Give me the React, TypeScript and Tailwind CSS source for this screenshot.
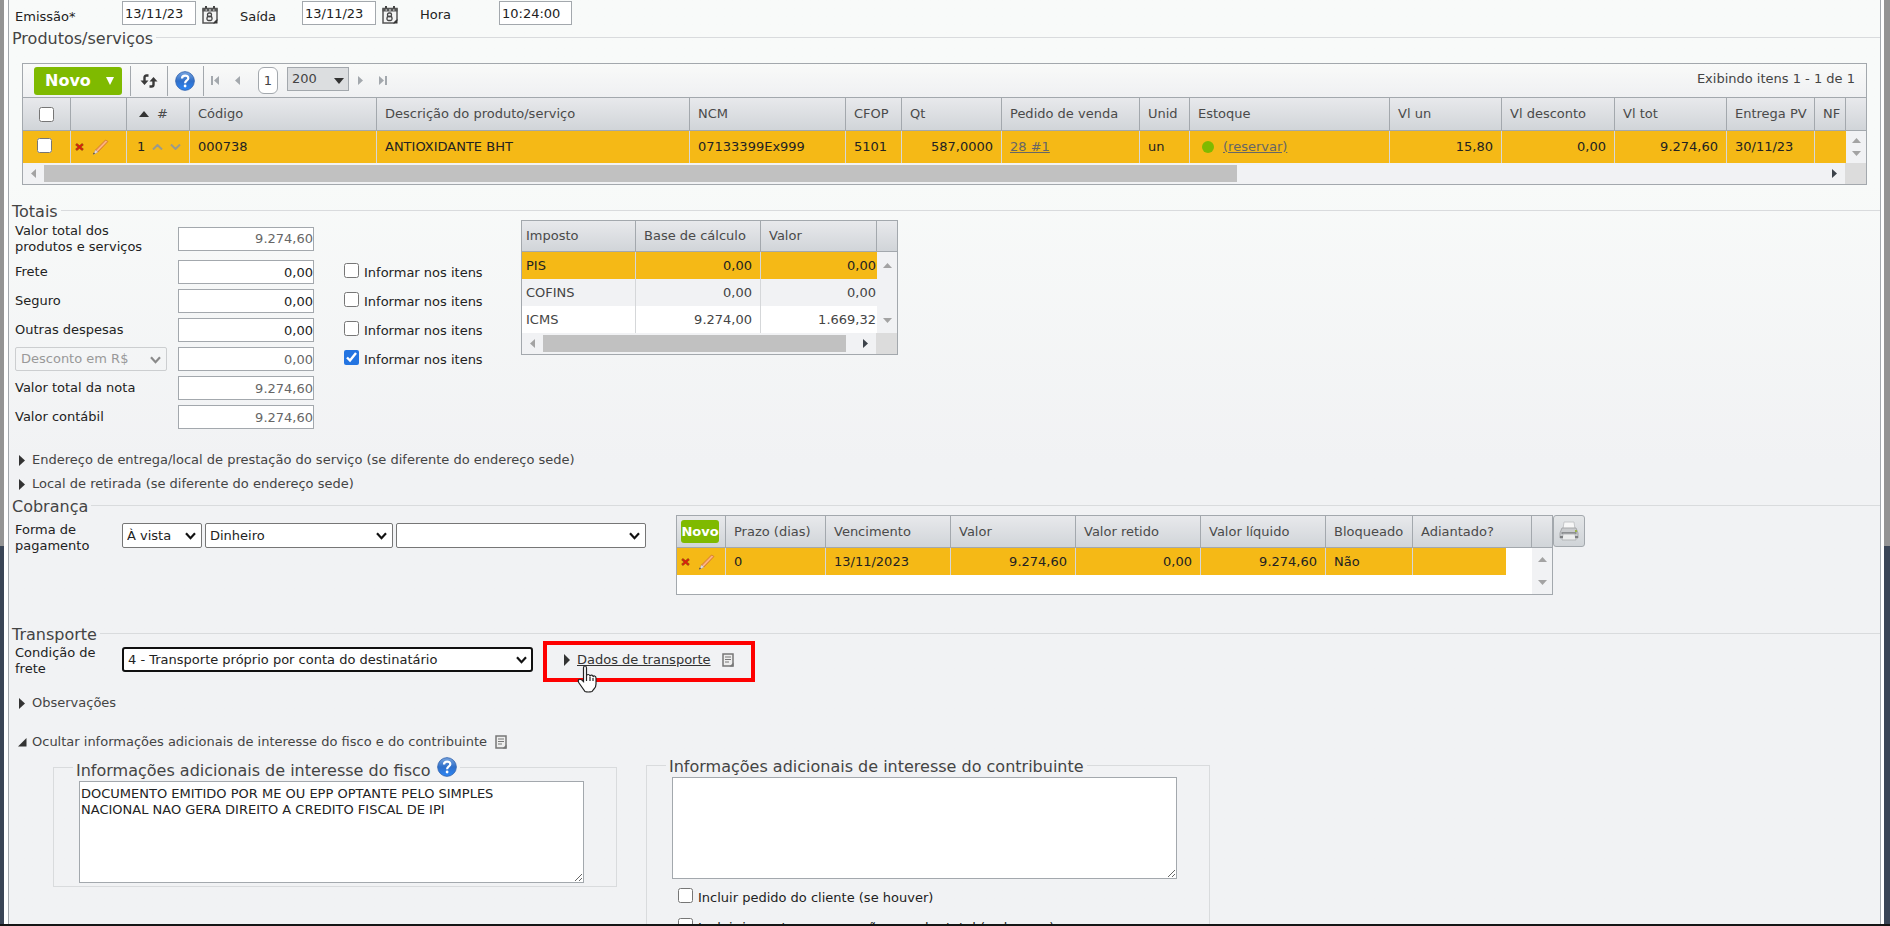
import clsx from "clsx";
import React from "react";

type Align = "left" | "right";

const inputStyle =
  "h-6 border border-[#a3a8ad] bg-white text-[13px] text-[#222] outline-none";
const headRow =
  "bg-linear-to-b from-[#e8e9ec] to-[#d0d4d8] text-left text-[#4a4a4a]";
const headCell = "border-r border-b border-[#a3a8ad] px-2 font-normal";

function Triangle({
  dir,
  className,
}: {
  dir: "up" | "down" | "left" | "right";
  className?: string;
}) {
  const points = {
    up: "0,6 6,0 12,6",
    down: "0,0 12,0 6,6",
    left: "6,0 6,12 0,6",
    right: "0,0 6,6 0,12",
  };
  const vertical = dir === "up" || dir === "down";
  return (
    <svg
      viewBox={vertical ? "0 0 12 6" : "0 0 6 12"}
      preserveAspectRatio="none"
      className={clsx("shrink-0", className)}
      fill="currentColor"
      aria-hidden="true"
    >
      <polygon points={points[dir]} />
    </svg>
  );
}

function CalendarIcon() {
  return (
    <svg width="16" height="18" viewBox="0 0 16 18" aria-hidden="true">
      <path d="M1 2.500h14V14l-3 3H1z" fill="#f4f4f4" stroke="#555" strokeWidth="1.500" />
      <path d="M.5 4h15" stroke="#555" strokeWidth="3" />
      <path d="M4 0v2.500M12 0v2.500" stroke="#444" strokeWidth="2" />
      <path d="M3.500 4h1.500M7 4h2M11 4h1.500" stroke="#eee" strokeWidth="1" />
      <rect x="5.500" y="7" width="4" height="3.500" rx="1.500" fill="none" stroke="#444" strokeWidth="1.300" />
      <rect x="5" y="10.500" width="5" height="4" rx="1.500" fill="none" stroke="#444" strokeWidth="1.300" />
      <path d="M15.500 13v4.500H11z" fill="#333" />
    </svg>
  );
}

function HelpIcon() {
  return (
    <svg width="20" height="20" viewBox="0 0 20 20" aria-hidden="true">
      <defs>
        <linearGradient id="help" x1="0" y1="0" x2="0" y2="1">
          <stop offset="0" stopColor="#7aa6e0" />
          <stop offset="0.5" stopColor="#2f6fc9" />
          <stop offset="1" stopColor="#2a86f8" />
        </linearGradient>
      </defs>
      <circle cx="10" cy="10" r="9.300" fill="url(#help)" stroke="#3a6bb5" />
      <path
        d="M7 7.500c0-4 6.300-3.800 6.300-.3 0 2.300-3.200 2.300-3.200 5"
        fill="none"
        stroke="#fff"
        strokeWidth="2.200"
      />
      <circle cx="10.100" cy="15" r="1.400" fill="#fff" />
    </svg>
  );
}

function RefreshIcon() {
  return (
    <svg width="18" height="14" viewBox="0 0 18 14" aria-hidden="true">
      <path
        d="M8.500 1.500H6.500Q4.500 1.500 4.500 3.500V8M9.500 12.500h2q2 0 2-2V6"
        fill="none"
        stroke="#3a3a3a"
        strokeWidth="2.400"
      />
      <path d="M.5 6.500h8L4.500 11zM9.500 7.500h8L13.500 3z" fill="#3a3a3a" />
    </svg>
  );
}

function DeleteIcon() {
  return (
    <svg width="9" height="8" viewBox="0 0 9 8" aria-hidden="true">
      <path d="M1 1l7 6M8 1L1 7" stroke="#9a5a10" strokeWidth="2.600" />
      <path d="M1.500 1.200l6 5.600M7.500 1.200l-6 5.600" stroke="#e01b0c" strokeWidth="1.500" />
    </svg>
  );
}

function PencilIcon() {
  return (
    <svg width="17" height="16" viewBox="0 0 17 16" aria-hidden="true">
      <path d="M3.500 11L13.500 1l2.500 1.500L6 13z" fill="#f79a5c" stroke="#c9762e" strokeWidth=".7" />
      <path d="M4.800 12L14.500 2" stroke="#fcc9a0" />
      <path d="M3.500 11L6 13l-4.500 2.500z" fill="#e8e0ee" stroke="#a99" strokeWidth=".5" />
      <path d="M1 15.500l2-.9-1.200-1z" fill="#333" />
    </svg>
  );
}

function NoteIcon() {
  return (
    <svg width="12" height="14" viewBox="0 0 12 14" aria-hidden="true">
      <path d="M1 1h10v12H1z" fill="#eee" stroke="#777" strokeWidth="1.500" />
      <path d="M3 4h6M3 6.500h6M3 9h4" stroke="#777" />
      <path d="M11.500 9.500v4H7.500z" fill="#777" />
    </svg>
  );
}

function PrinterIcon() {
  return (
    <svg width="20" height="20" viewBox="0 0 20 20" aria-hidden="true">
      <path d="M5 1h10l1 7H4z" fill="#f7f7f7" stroke="#c5c7c9" />
      <path d="M3 7h14l2 5v5H1v-5z" fill="#c9cbcd" stroke="#a7a9ab" />
      <path d="M2.500 11h15v2h-15z" fill="#8d8f91" />
      <path d="M4 13h12l1 6H3z" fill="#eceded" stroke="#b5b7b9" />
      <path d="M1 15h3v2H1zM16 15h3v2h-3z" fill="#7d7f81" />
      <path d="M16 9h2v2h-2z" fill="#9db54a" />
    </svg>
  );
}

function HandCursor() {
  return (
    <svg width="20" height="28" viewBox="0 0 20 28" aria-hidden="true">
      <path
        d="M6.500 16V3Q6.500 1 8 1t1.500 2v8q0-1.500 1.700-1.500T13 11.500q0-1.500 1.600-1.300T16 12q.3-1.200 1.600-1T19 13v6q0 3-2 5l-2 2.500q-4 1-7 0L2 18q-1.500-2.500 0-3.500t4.500 2z"
        fill="#fff"
        stroke="#222"
        strokeWidth="1.200"
      />
      <path d="M9.500 11v5M13 12v4M16 13v3" stroke="#222" strokeWidth="1.200" />
    </svg>
  );
}

function Select({
  width,
  className,
  children,
  ...props
}: React.ComponentProps<"select"> & { width: string }) {
  return (
    <div className={clsx("relative", width)}>
      <select
        {...props}
        className={clsx("block w-full appearance-none pr-5", className)}
      >
        {children}
      </select>
      <svg
        width="11"
        height="8"
        viewBox="0 0 11 8"
        className={clsx(
          "pointer-events-none absolute top-[9px] right-[6px]",
          props.disabled ? "text-[#8a8a8a]" : "text-[#111]"
        )}
        fill="none"
        stroke="currentColor"
        strokeWidth="2.200"
        aria-hidden="true"
      >
        <path d="M1 1.200l4.500 5L10 1.200" />
      </svg>
    </div>
  );
}

const selectStyle =
  "h-[25px] rounded-[2px] border border-[#767676] bg-white pl-1 text-[13px] text-[#222]";

function SectionTitle({ children }: { children: React.ReactNode }) {
  return (
    <div className="flex h-[18px] pl-[3px]">
      <h2 className="pr-[3px] text-[16px] leading-5 text-[#444]">{children}</h2>
      <div className="mt-2 h-px flex-1 bg-[#d9dbdd]" />
    </div>
  );
}

function Disclosure({
  children,
  open,
}: {
  children: React.ReactNode;
  open?: boolean;
}) {
  return (
    <button
      type="button"
      aria-expanded={!!open}
      className="flex h-[22px] items-center pl-[9px] text-[#444]"
    >
      <span className="flex w-3.5">
        {open ? (
          <svg width="9" height="9" viewBox="0 0 9 9" aria-hidden="true">
            <path d="M8.500 0v8.500H0z" fill="#333" />
          </svg>
        ) : (
          <Triangle dir="right" className="ml-px h-[11px] w-1.5 text-[#333]" />
        )}
      </span>
      {children}
    </button>
  );
}

function HorizontalScroll({ thumb }: { thumb: string }) {
  return (
    <div className="flex h-[21px] bg-[#f1f2f4]">
      <div className="flex flex-1 items-center">
        <span className="flex w-[21px] justify-center">
          <Triangle dir="left" className="h-[9px] w-[5px] text-[#a3a3a3]" />
        </span>
        <div className="flex-1">
          <div className={clsx("h-[17px] bg-[#c1c1c1]", thumb)} />
        </div>
        <span className="flex w-[21px] justify-center">
          <Triangle dir="right" className="h-[9px] w-[5px] text-[#3c434a]" />
        </span>
      </div>
      <div className="w-[21px] bg-[#dcdcdc]" />
    </div>
  );
}

function VerticalArrows() {
  return (
    <div className="flex h-full flex-col items-center justify-between">
      <Triangle dir="up" className="h-[5px] w-[9px] text-[#a3a3a3]" />
      <Triangle dir="down" className="h-[5px] w-[9px] text-[#a3a3a3]" />
    </div>
  );
}

function Cell({
  children,
  align = "left",
  className,
}: {
  children?: React.ReactNode;
  align?: Align;
  className?: string;
}) {
  return (
    <td
      className={clsx(
        "border-r border-[#d5d7d9] px-2 whitespace-nowrap",
        align === "right" && "text-right",
        className
      )}
    >
      {children}
    </td>
  );
}

function RowActions() {
  return (
    <div className="flex items-center gap-2">
      <button type="button" aria-label="Excluir">
        <DeleteIcon />
      </button>
      <button type="button" aria-label="Editar">
        <PencilIcon />
      </button>
    </div>
  );
}

function HeaderFields() {
  return (
    <div className="flex h-[29px] items-start pt-px pl-1.5 text-[#222]">
      <label htmlFor="emissao" className="mt-1 w-[107px] leading-6">
        Emissão*
      </label>
      <input id="emissao" className={clsx(inputStyle, "w-[74px] px-0.5")} defaultValue="13/11/23" />
      <button type="button" aria-label="Calendário de emissão" className="mt-[5px] ml-1.5">
        <CalendarIcon />
      </button>
      <label htmlFor="saida" className="mt-1 ml-[22px] w-[62px] leading-6">
        Saída
      </label>
      <input id="saida" className={clsx(inputStyle, "w-[74px] px-0.5")} defaultValue="13/11/23" />
      <button type="button" aria-label="Calendário de saída" className="mt-[5px] ml-1.5">
        <CalendarIcon />
      </button>
      <label htmlFor="hora" className="mt-0.5 ml-[22px] w-[79px] leading-6">
        Hora
      </label>
      <input id="hora" className={clsx(inputStyle, "w-[73px] px-0.5")} defaultValue="10:24:00" />
    </div>
  );
}

function Toolbar() {
  const pager = "text-[#a3a8ad]";
  return (
    <div className="flex h-[34px] items-center border-b border-[#a3a8ad] bg-linear-to-b from-[#f9faf9] to-[#eff0f2] pr-[11px] pl-[11px]">
      <button
        type="button"
        className="flex h-7 w-[88px] items-center justify-between rounded-[3px] bg-[#7fba00] pr-2 pl-[11px] text-[16px] font-bold text-white"
      >
        Novo
        <Triangle dir="down" className="h-2 w-2" />
      </button>
      <span className="ml-2 h-[30px] w-px bg-[#a3a8ad]" />
      <button type="button" aria-label="Atualizar" className="ml-[9px]">
        <RefreshIcon />
      </button>
      <span className="ml-[9px] h-[30px] w-px bg-[#a3a8ad]" />
      <button type="button" aria-label="Ajuda" className="ml-[7px]">
        <HelpIcon />
      </button>
      <span className="ml-2 h-[30px] w-px bg-[#a3a8ad]" />
      <button type="button" aria-label="Primeira página" className={clsx("ml-[7px] flex", pager)}>
        <span className="h-[9px] w-0.5 bg-[#a3a8ad]" />
        <Triangle dir="left" className="ml-px h-[9px] w-[5px]" />
      </button>
      <button type="button" aria-label="Página anterior" className={clsx("ml-4", pager)}>
        <Triangle dir="left" className="h-[9px] w-[5px]" />
      </button>
      <button
        type="button"
        className="ml-[18px] h-[27px] w-5 rounded-[6px] border border-[#a3a8ad] bg-white text-[#444]"
      >
        1
      </button>
      <div className="relative mb-[3px] ml-[9px]">
        <select
          aria-label="Itens por página"
          className="block h-6 w-[62px] appearance-none border border-[#a3a8ad] bg-[#dcdee0] pl-1 text-[#444]"
        >
          <option>200</option>
        </select>
        <Triangle
          dir="down"
          className="pointer-events-none absolute top-[11px] right-[5px] h-[6px] w-[10px] text-[#333]"
        />
      </div>
      <button type="button" aria-label="Próxima página" className={clsx("ml-[9px]", pager)}>
        <Triangle dir="right" className="h-[9px] w-[5px]" />
      </button>
      <button type="button" aria-label="Última página" className={clsx("ml-4 flex", pager)}>
        <Triangle dir="right" className="mr-px h-[9px] w-[5px]" />
        <span className="h-[9px] w-0.5 bg-[#a3a8ad]" />
      </button>
      <span className="mb-[3px] ml-auto text-[#444]">Exibindo itens 1 - 1 de 1</span>
    </div>
  );
}

function ProductsGrid() {
  const headers = ["NCM", "CFOP", "Qt", "Pedido de venda", "Unid", "Estoque"];
  const values = ["Vl un", "Vl desconto", "Vl tot", "Entrega PV", "NF"];
  return (
    <div className="mx-[13px] mt-4 border border-[#a3a8ad]">
      <Toolbar />
      <table className="w-full table-fixed border-separate border-spacing-0">
        <colgroup>
          <col className="w-12" />
          <col className="w-[56px]" />
          <col className="w-[63px]" />
          <col className="w-[187px]" />
          <col />
          <col className="w-[156px]" />
          <col className="w-[56px]" />
          <col className="w-[100px]" />
          <col className="w-[138px]" />
          <col className="w-[50px]" />
          <col className="w-[200px]" />
          <col className="w-[112px]" />
          <col className="w-[113px]" />
          <col className="w-[112px]" />
          <col className="w-[88px]" />
          <col className="w-[31px]" />
          <col className="w-[20px]" />
        </colgroup>
        <thead>
          <tr className={clsx("h-[33px]", headRow)}>
            <th className="border-r border-b border-[#a3a8ad] pl-4">
              <input type="checkbox" aria-label="Selecionar todos" className="block size-[15px]" />
            </th>
            <th className={headCell} />
            <th className={headCell}>
              <span className="flex items-center gap-2 pl-1">
                <Triangle dir="up" className="h-[6px] w-[10px] text-[#333]" />#
              </span>
            </th>
            <th className={headCell}>Código</th>
            <th className={headCell}>Descrição do produto/serviço</th>
            {headers.map((h) => (
              <th key={h} className={headCell}>
                {h}
              </th>
            ))}
            {values.map((h) => (
              <th key={h} className={clsx(headCell, "whitespace-nowrap")}>
                {h}
              </th>
            ))}
            <th className="border-b border-[#a3a8ad]" />
          </tr>
        </thead>
        <tbody>
          <tr className="h-8 bg-[#f5b916] text-[#222]">
            <td className="border-r border-[#d5d7d9] pb-1 pl-[14px]">
              <input type="checkbox" aria-label="Selecionar item 1" className="block size-[15px]" />
            </td>
            <td className="border-r border-[#d5d7d9] pl-1">
              <RowActions />
            </td>
            <td className="border-r border-[#d5d7d9] pl-[10px]">
              <span className="flex items-center gap-[7px]">
                1
                <svg width="30" height="6" viewBox="0 0 30 6" aria-hidden="true">
                  <path
                    d="M1 5.500l4.500-4.500L10 5.500M19 .5L23.500 5 28 .5"
                    fill="none"
                    stroke="#9a9a8c"
                    strokeWidth="2"
                  />
                </svg>
              </span>
            </td>
            <Cell>000738</Cell>
            <Cell>ANTIOXIDANTE BHT</Cell>
            <Cell>07133399Ex999</Cell>
            <Cell>5101</Cell>
            <Cell align="right">587,0000</Cell>
            <Cell>
              <a href="#pedido" className="text-[#666] underline">
                28 #1
              </a>
            </Cell>
            <Cell>un</Cell>
            <Cell>
              <span className="flex items-center gap-[9px] pl-1">
                <span className="size-3 rounded-full bg-[#7fba00]" />
                <a href="#reservar" className="text-[#666] underline">
                  (reservar)
                </a>
              </span>
            </Cell>
            <Cell align="right">15,80</Cell>
            <Cell align="right">0,00</Cell>
            <Cell align="right">9.274,60</Cell>
            <Cell>30/11/23</Cell>
            <td />
            <td className="h-8 bg-[#f1f2f4] py-[7px]">
              <div className="h-[18px]">
                <VerticalArrows />
              </div>
            </td>
          </tr>
        </tbody>
      </table>
      <HorizontalScroll thumb="w-[67%]" />
    </div>
  );
}

const totals = [
  { id: "frete", label: "Frete", value: "0,00", check: true },
  { id: "seguro", label: "Seguro", value: "0,00", check: true },
  { id: "outras", label: "Outras despesas", value: "0,00", check: true },
  { id: "desconto", label: "Desconto em R$", value: "0,00", check: true, select: true },
  { id: "total-nota", label: "Valor total da nota", value: "9.274,60", readOnly: true },
  { id: "contabil", label: "Valor contábil", value: "9.274,60", readOnly: true },
];

function TotalsForm() {
  return (
    <div className="flex w-[512px] flex-col gap-[5px] pt-0.5 pl-1.5 text-[#222]">
      <div className="flex h-[33px] items-center">
        <label htmlFor="total-produtos" className="w-[163px] leading-4">
          Valor total dos
          <br />
          produtos e serviços
        </label>
        <input
          id="total-produtos"
          readOnly
          className={clsx(inputStyle, "w-[136px] text-right text-[#666]")}
          value="9.274,60"
        />
      </div>
      {totals.map((t) => (
        <div key={t.id} className="flex h-6 items-center">
          {t.select ? (
            <div className="w-[163px]">
              <Select
                disabled
                width="w-[152px]"
                aria-label="Tipo de desconto"
                className="h-6 rounded-[2px] border border-[#ccced0] bg-transparent pl-[5px] text-[#999]"
              >
                <option>{t.label}</option>
              </Select>
            </div>
          ) : (
            <label htmlFor={t.id} className="w-[163px]">
              {t.label}
            </label>
          )}
          <input
            id={t.id}
            aria-label={t.label}
            readOnly={t.readOnly}
            className={clsx(
              inputStyle,
              "w-[136px] text-right",
              (t.readOnly || t.select) && "text-[#666]"
            )}
            defaultValue={t.value}
          />
          {t.check && (
            <label className="ml-[30px] flex gap-[5px]">
              <input
                type="checkbox"
                defaultChecked={t.select}
                className="size-[15px] accent-[#2374e1]"
              />
              <span className="pt-0.5 leading-4">Informar nos itens</span>
            </label>
          )}
        </div>
      ))}
    </div>
  );
}

function TaxTable() {
  const rows = [
    ["PIS", "0,00", "0,00"],
    ["COFINS", "0,00", "0,00"],
    ["ICMS", "9.274,00", "1.669,32"],
  ];
  const colors = ["bg-[#f5b916] text-[#222]", "bg-[#f1f2f4]", "bg-white"];
  return (
    <div className="w-[377px] self-start border border-[#a3a8ad] bg-[#f1f2f4] text-[#444]">
      <table className="w-full table-fixed border-separate border-spacing-0">
        <colgroup>
          <col className="w-[114px]" />
          <col className="w-[125px]" />
          <col />
          <col className="w-[20px]" />
        </colgroup>
        <thead>
          <tr className={clsx("h-[31px]", headRow)}>
            <th className="border-r border-b border-[#a3a8ad] pl-1 font-normal">Imposto</th>
            <th className={clsx(headCell, "whitespace-nowrap")}>Base de cálculo</th>
            <th className={headCell}>Valor</th>
            <th className="border-b border-[#a3a8ad]" />
          </tr>
        </thead>
        <tbody>
          {rows.map(([name, base, value], i) => (
            <tr key={name} className={clsx("h-[27px]", colors[i])}>
              <td className="border-r border-[#d5d7d9] pl-1">{name}</td>
              <Cell align="right">{base}</Cell>
              <td className="pr-px text-right">{value}</td>
              {i === 0 && (
                <td rowSpan={3} className="bg-[#f1f2f4]">
                  <div className="h-[60px]">
                    <VerticalArrows />
                  </div>
                </td>
              )}
            </tr>
          ))}
        </tbody>
      </table>
      <HorizontalScroll thumb="w-[97%]" />
    </div>
  );
}

function ChargesTable() {
  const headers = [
    "Prazo (dias)",
    "Vencimento",
    "Valor",
    "Valor retido",
    "Valor líquido",
    "Bloqueado",
    "Adiantado?",
  ];
  return (
    <div className="flex h-20 w-[877px] flex-col border border-[#a3a8ad] bg-white">
      <table className="w-full table-fixed border-separate border-spacing-0">
        <colgroup>
          <col className="w-[49px]" />
          <col className="w-[100px]" />
          <col className="w-[125px]" />
          <col className="w-[125px]" />
          <col className="w-[125px]" />
          <col className="w-[125px]" />
          <col className="w-[87px]" />
          <col />
          <col className="w-[20px]" />
        </colgroup>
        <thead>
          <tr className={clsx("h-8", headRow)}>
            <th className="border-r border-b border-[#a3a8ad] pl-1">
              <button
                type="button"
                className="flex h-[23px] w-[38px] items-center justify-center rounded-[3px] bg-[#7fba00] text-[13px] font-bold text-white"
              >
                Novo
              </button>
            </th>
            {headers.map((h) => (
              <th key={h} className={clsx(headCell, "whitespace-nowrap")}>
                {h}
              </th>
            ))}
            <th className="border-b border-[#a3a8ad]" />
          </tr>
        </thead>
        <tbody>
          <tr className="h-[27px] text-[#222]">
            <td className="border-r border-[#d5d7d9] bg-[#f5b916] pl-1">
              <RowActions />
            </td>
            <Cell className="bg-[#f5b916]">0</Cell>
            <Cell className="bg-[#f5b916]">13/11/2023</Cell>
            <Cell align="right" className="bg-[#f5b916]">9.274,60</Cell>
            <Cell align="right" className="bg-[#f5b916]">0,00</Cell>
            <Cell align="right" className="bg-[#f5b916]">9.274,60</Cell>
            <Cell className="bg-[#f5b916]">Não</Cell>
            <td>
              <div className="mr-[26px] h-[27px] bg-[#f5b916]" />
            </td>
            <td rowSpan={2} className="bg-[#f1f2f4]">
              <div className="h-7">
                <VerticalArrows />
              </div>
            </td>
          </tr>
          <tr className="h-[19px]">
            <td colSpan={8} />
          </tr>
        </tbody>
      </table>
    </div>
  );
}

function AdditionalInfo() {
  return (
    <div className="flex items-start gap-[29px] pl-11">
      <fieldset className="w-[564px] border border-[#d9dbdd] pb-[3px]">
        <legend className="ml-[19px] flex h-7 items-center gap-1.5 px-[3px] text-[16px] leading-5 text-[#444]">
          <span className="pt-2">Informações adicionais de interesse do fisco</span>
          <HelpIcon />
        </legend>
        <textarea
          aria-label="Informações adicionais de interesse do fisco"
          className="ml-[25px] block h-[102px] w-[505px] border border-[#a3a8ad] bg-white px-px py-1 leading-4 text-[#222]"
          defaultValue={
            "DOCUMENTO EMITIDO POR ME OU EPP OPTANTE PELO SIMPLES\nNACIONAL NAO GERA DIREITO A CREDITO FISCAL DE IPI"
          }
        />
      </fieldset>
      <fieldset className="w-[564px] border border-[#d9dbdd] pb-10">
        <legend className="ml-[19px] h-6 px-[3px] pt-1 text-[16px] leading-5 text-[#444]">
          Informações adicionais de interesse do contribuinte
        </legend>
        <textarea
          aria-label="Informações adicionais de interesse do contribuinte"
          className="ml-[25px] block h-[102px] w-[505px] border border-[#a3a8ad] bg-white px-px py-1 leading-4 text-[#222]"
        />
        <div className="mt-[9px] ml-[31px] flex flex-col gap-3 text-[#222]">
          <label className="flex gap-[5px]">
            <input type="checkbox" className="size-[15px]" />
            <span className="pt-0.5 leading-4">Incluir pedido do cliente (se houver)</span>
          </label>
          <label className="flex gap-[5px]">
            <input type="checkbox" className="size-[15px]" />
            <span className="pt-0.5 leading-4">
              Incluir imposto por operação no valor total (se houver)
            </span>
          </label>
        </div>
      </fieldset>
    </div>
  );
}

export default function App(): ReturnType<React.FC> {
  return (
    <div className="flex h-screen flex-col overflow-hidden bg-linear-to-b from-[#949494] from-59% to-[#3a4556] to-59% font-['DejaVu_Sans',Verdana,sans-serif] text-[13px] leading-4">
      <div className="mr-1.5 ml-1 flex min-h-0 flex-1 bg-white pr-[3px] pl-1">
        <main className="flex-1 overflow-hidden border-x border-[#a3a8ad] bg-linear-to-b from-[#f8faf9] from-20% to-[#f1f2f4] to-50%">
          <HeaderFields />

          <SectionTitle>Produtos/serviços</SectionTitle>
          <ProductsGrid />

          <section className="mt-[17px]">
            <SectionTitle>Totais</SectionTitle>
            <div className="flex">
              <TotalsForm />
              <TaxTable />
            </div>
            <div className="mt-5 flex flex-col items-start gap-0.5">
              <Disclosure>
                Endereço de entrega/local de prestação do serviço (se diferente do endereço sede)
              </Disclosure>
              <Disclosure>Local de retirada (se diferente do endereço sede)</Disclosure>
            </div>
          </section>

          <section className="mt-0.5">
            <SectionTitle>Cobrança</SectionTitle>
            <div className="flex items-start pl-1.5">
              <label htmlFor="forma" className="w-[107px] pt-[7px] leading-4 text-[#222]">
                Forma de
                <br />
                pagamento
              </label>
              <div className="flex gap-[3px] pt-2">
                <Select id="forma" width="w-[80px]" className={selectStyle}>
                  <option>À vista</option>
                </Select>
                <Select aria-label="Meio de pagamento" width="w-[188px]" className={selectStyle}>
                  <option>Dinheiro</option>
                </Select>
                <Select aria-label="Conta" width="w-[250px]" className={selectStyle}>
                  <option></option>
                </Select>
              </div>
              <div className="ml-[30px]">
                <ChargesTable />
              </div>
              <button
                type="button"
                aria-label="Imprimir"
                className="flex size-8 items-center justify-center rounded-[3px] border border-[#a3a8ad] bg-linear-to-b from-[#e4e6e8] to-[#d0d4d8]"
              >
                <PrinterIcon />
              </button>
            </div>
          </section>

          <section className="mt-[30px]">
            <SectionTitle>Transporte</SectionTitle>
            <div className="flex items-start pt-0.5 pl-1.5">
              <label htmlFor="frete-cond" className="w-[107px] leading-4 text-[#222]">
                Condição de
                <br />
                frete
              </label>
              <div className="pt-0.5">
                <Select
                  id="frete-cond"
                  width="w-[411px]"
                  className="h-[25px] rounded-[3px] border-2 border-[#101010] bg-white pl-1 text-[#222]"
                >
                  <option>4 - Transporte próprio por conta do destinatário</option>
                </Select>
              </div>
              <div className="relative ml-[31px] flex h-[30px] items-center">
                <Triangle dir="right" className="h-3 w-1.5 text-[#333]" />
                <a href="#transporte" className="mr-[11px] ml-[7px] text-[#333] underline">
                  Dados de transporte
                </a>
                <NoteIcon />
                <div className="pointer-events-none absolute -inset-x-[21px] -top-1 -bottom-[7px] border-4 border-[#fe0000]" />
                <div className="pointer-events-none absolute top-5 left-[13px]">
                  <HandCursor />
                </div>
              </div>
            </div>
            <div className="mt-[15px] flex flex-col items-start gap-[17px]">
              <Disclosure>Observações</Disclosure>
              <Disclosure open>
                <span className="mr-2">
                  Ocultar informações adicionais de interesse do fisco e do contribuinte
                </span>
                <NoteIcon />
              </Disclosure>
            </div>
          </section>

          <AdditionalInfo />
        </main>
      </div>
      <div className="h-0.5 shrink-0 bg-[#151515]" />
    </div>
  );
}
